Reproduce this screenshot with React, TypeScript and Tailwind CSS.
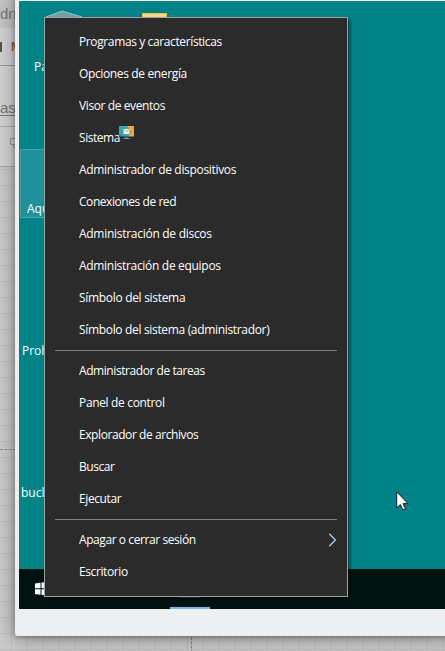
import React from "react";

type Entry = { label: string; tracking: string; submenu?: boolean; badge?: boolean };

const groups: Entry[][] = [
  [
    { label: "Programas y características", tracking: "tracking-[-0.38px]" },
    { label: "Opciones de energía", tracking: "tracking-[-0.36px]" },
    { label: "Visor de eventos", tracking: "tracking-[-0.4px]" },
    { label: "Sistema", tracking: "tracking-[-0.45px]", badge: true },
    { label: "Administrador de dispositivos", tracking: "tracking-[-0.32px]" },
    { label: "Conexiones de red", tracking: "tracking-[-0.44px]" },
    { label: "Administración de discos", tracking: "tracking-[-0.28px]" },
    { label: "Administración de equipos", tracking: "tracking-[-0.31px]" },
    { label: "Símbolo del sistema", tracking: "tracking-[-0.31px]" },
    { label: "Símbolo del sistema (administrador)", tracking: "tracking-[-0.33px]" },
  ],
  [
    { label: "Administrador de tareas", tracking: "tracking-[-0.43px]" },
    { label: "Panel de control", tracking: "tracking-[-0.34px]" },
    { label: "Explorador de archivos", tracking: "tracking-[-0.42px]" },
    { label: "Buscar", tracking: "tracking-[-0.45px]" },
    { label: "Ejecutar", tracking: "tracking-[-0.4px]" },
  ],
  [
    { label: "Apagar o cerrar sesión", tracking: "tracking-[-0.42px]", submenu: true },
    { label: "Escritorio", tracking: "tracking-[-0.4px]" },
  ],
];

function Monitor() {
  return (
    <svg width="16" height="14" viewBox="0 0 16 14" className="absolute -top-1 left-10">
      <rect width="15" height="11" fill="#36a5b5" />
      <path d="M15 0v11H9l3-5-4-6z" fill="#f3a63c" />
      <path d="M0 8l5 3H0z" fill="#2786a5" />
      <rect x="4.5" y="3" width="6" height="5" fill="#f7ecdc" />
      <path d="M5 3.5l2.500 2 2.500-2" stroke="#e0a566" fill="none" />
      <path d="M0 10.500h15v1H0z" fill="#17303a" />
      <path d="M6 11.500h3v.800h2V13H4v-.700h2z" fill="#8b9499" />
    </svg>
  );
}

function Menu() {
  return (
    <div className="absolute left-[44px] top-[17px] z-10 h-[580px] w-[304px] border border-[#a0a0a0] bg-[#2b2b2b] py-2 shadow-[2px_2px_3px_rgba(0,0,0,0.5)]">
      {groups.map((group, g) => (
        <div key={g}>
          {g > 0 && <div className="mx-2.5 my-1 h-px bg-[#808080]" />}
          {group.map((e) => (
            <div key={e.label} className="flex h-8 items-center justify-between pl-[34px] pr-2.5">
              <span className={"relative whitespace-nowrap text-[12px] leading-4 text-white " + e.tracking}>
                {e.label}
                {e.badge && <Monitor />}
              </span>
              {e.submenu && (
                <svg width="9" height="14" viewBox="0 0 9 14" fill="none" stroke="#a9d5f5" strokeWidth="1.2">
                  <path d="M1.200.800 7.500 7l-6.300 6.200" />
                </svg>
              )}
            </div>
          ))}
        </div>
      ))}
    </div>
  );
}

function PageToolbar() {
  return (
    <div className="flex h-[167px] w-5 flex-col overflow-hidden border-b border-[#aaa] bg-[#d4d4d4] font-['Liberation_Sans',sans-serif] text-[#777]">
      <div className="h-7 shrink-0 bg-[#c6c6c6] pt-1 text-[15px] leading-5">dn</div>
      <div className="flex h-[38px] shrink-0 items-center gap-[9px] border-b border-[#999]">
        <i className="h-[10px] w-[2px] shrink-0 bg-[#555]" />
        <b className="text-[12px] text-[#98603f]">M</b>
      </div>
      <div className="flex h-[61px] shrink-0 flex-col items-start border-b border-[#aaa] pt-[35px]">
        <span className="border-b border-[#777] text-[15px] leading-[14px]">as</span>
      </div>
      <svg width="20" height="40" fill="none" stroke="#999" className="shrink-0">
        <path d="M10.500 11.500h9v6h-9zm3 6v3h3v-3" />
      </svg>
    </div>
  );
}

function WindowsLogo() {
  return (
    <svg width="14" height="14" fill="white">
      <path d="M0 1.500 5.500.700v5.500H0zM6.500.600 14 0v6.200H6.500zM0 7.200h5.500v5.500L0 12zM6.500 7.200H14V14l-7.500-1.200z" />
    </svg>
  );
}

function Desktop() {
  return (
    <div className="flex h-[568px] flex-col bg-[#028387] text-[12px] leading-4 text-white">
      <div className="flex h-[148px] gap-[60px] pl-[15px]">
        <div className="flex w-16 flex-col pt-2">
          <svg width="60" height="18" className="ml-[11px]">
            <path d="M1 8 17 2l20 6v10H1z" fill="#6aa5a8" />
            <path d="M1 8 17 2l20 6" stroke="#9bc3c4" fill="none" />
          </svg>
          <span className="mt-8 h-4">Papelera</span>
        </div>
        <div className="-ml-4 mt-3 h-2 w-[25px] border border-[#e8bd4c] bg-[#f8dc86]" />
      </div>
      <div className="ml-px flex h-[69px] w-[76px] items-end border border-[#49a3aa] bg-[#20909a] pl-1.5">
        <span>Aquí</span>
      </div>
      <div className="flex flex-col gap-[126px] pl-[3px] pt-[125px]">
        <span>Prohibido</span>
        <span className="-ml-px">bucle</span>
      </div>
    </div>
  );
}

function Taskbar() {
  return (
    <div className="flex h-10 items-center bg-[#001311] pl-4">
      <WindowsLogo />
      <div className="ml-[121px] flex h-10 w-10 flex-col items-center justify-between">
        <div className="h-[29px] w-5 bg-[#2f4875]" />
        <div className="h-0.5 w-10 bg-[#76b9ed]" />
      </div>
    </div>
  );
}

export default function App() {
  return (
    <div className="relative h-[651px] w-[445px] overflow-hidden bg-[#cbcbcd] bg-[linear-gradient(to_right,transparent_11px,#bfbfc1_11px,#bfbfc1_12px,transparent_12px),linear-gradient(to_bottom,transparent_9px,#bfbfc1_9px,#bfbfc1_10px,transparent_10px)] bg-[size:16px_16px] font-['Open_Sans','Noto_Sans',sans-serif]">
      <PageToolbar />
      <div className="mt-[282px] w-4 border-t border-dashed border-[#8b8b8b]" />
      <div className="ml-[191px] mt-[187px] h-4 border-l border-dashed border-[#8b8b8b]" />
      <div className="absolute -top-1.5 left-[15px] flex h-[642px] w-[440px] flex-col rounded-[3px] bg-[#edeff1] pl-1 pt-[7px] shadow-[0_1px_4px_rgba(0,0,0,0.3),0_2px_20px_rgba(0,0,0,0.4)]">
        <Desktop />
        <Taskbar />
      </div>
      <Menu />
      <svg width="14" height="21" viewBox="0 0 14 21" className="absolute left-[396px] top-[491px]">
        <path d="M.700.800v16l3.700-3.300 2.500 5.500 2.600-1.100-2.400-5.300h4.900z" fill="white" stroke="#101820" />
      </svg>
    </div>
  );
}
